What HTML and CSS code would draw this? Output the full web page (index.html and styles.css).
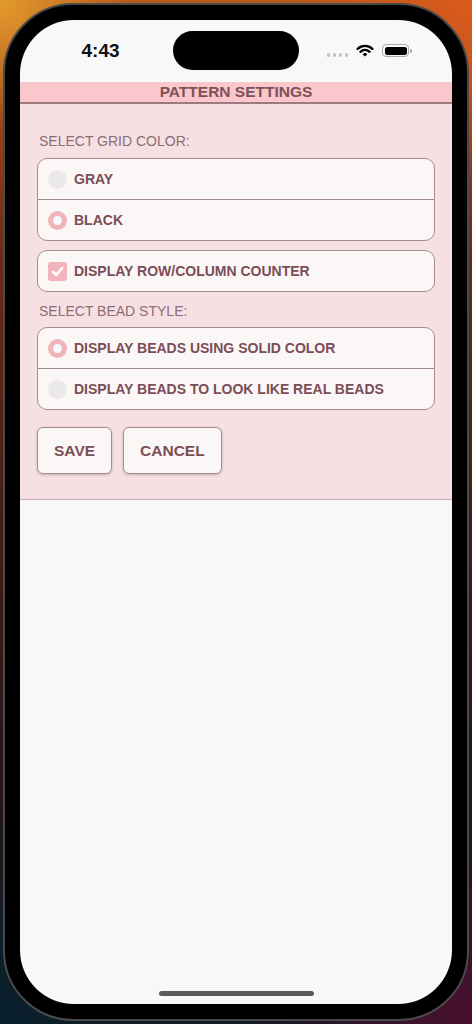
FILE: index.html
```html
<!DOCTYPE html>
<html lang="en">
<head>
<meta charset="utf-8">
<title>Pattern Settings</title>
<link rel="stylesheet" href="styles.css">
</head>
<body>
<div class="device">
  <div class="screen">
    <div class="status-bar">
      <div class="sb-left"><span class="time">4:43</span></div>
      <div class="island"></div>
      <div class="sb-right">
        <span class="dots"><i></i><i></i><i></i><i></i></span>
        <svg class="wifi" viewBox="0 0 18 13" width="18" height="13">
          <path d="M1.6 4.9 A10.8 10.8 0 0 1 16.4 4.9" fill="none" stroke="#000" stroke-width="2.3" stroke-linecap="round"/>
          <path d="M4.4 7.8 A6.7 6.7 0 0 1 13.6 7.8" fill="none" stroke="#000" stroke-width="2.3" stroke-linecap="round"/>
          <path d="M9 12.6 L6.7 10.3 A3.2 3.2 0 0 1 11.3 10.3 Z" fill="#000"/>
        </svg>
        <span class="battery"><span class="battery-fill"></span></span>
      </div>
    </div>

    <div class="app-header">PATTERN SETTINGS</div>

    <section class="settings">
      <p class="label">SELECT GRID COLOR:</p>
      <div class="group">
        <div class="option"><span class="radio"></span><span>GRAY</span></div>
        <div class="option"><span class="radio checked"></span><span>BLACK</span></div>
      </div>

      <div class="group single">
        <div class="option">
          <span class="checkbox">
            <svg viewBox="0 0 19 19" width="19" height="19"><path d="M5 9.8 L8.2 13 L14.2 6" fill="none" stroke="#fff" stroke-width="2.6" stroke-linecap="round" stroke-linejoin="round"/></svg>
          </span>
          <span>DISPLAY ROW/COLUMN COUNTER</span>
        </div>
      </div>

      <p class="label second">SELECT BEAD STYLE:</p>
      <div class="group">
        <div class="option"><span class="radio checked"></span><span>DISPLAY BEADS USING SOLID COLOR</span></div>
        <div class="option"><span class="radio"></span><span>DISPLAY BEADS TO LOOK LIKE REAL BEADS</span></div>
      </div>

      <div class="actions">
        <button class="btn">SAVE</button>
        <button class="btn">CANCEL</button>
      </div>
    </section>

    <div class="fill"></div>
    <div class="home-indicator"></div>
  </div>
</div>
</body>
</html>
```

FILE: styles.css
```css
* {
  box-sizing: border-box;
}

html, body {
  margin: 0;
  padding: 0;
}

body {
  width: 472px;
  height: 1024px;
  overflow: hidden;
  font-family: "Liberation Sans", Arial, sans-serif;
  background:
    radial-gradient(circle at 0 0, #e39a2c 0, rgba(227,154,44,0) 130px),
    radial-gradient(circle at 100% 0, #db5a1c 0, rgba(219,90,28,0) 170px),
    radial-gradient(circle at 100% 100%, #4a1030 0, rgba(74,16,48,0) 220px),
    radial-gradient(circle at 0 100%, #08202c 0, rgba(8,32,44,0) 220px),
    linear-gradient(180deg, #b85a1e 0, #6a2a16 260px, #3e1c16 560px, #221418 820px, #141a22 1024px);
}

.device {
  margin: 3px;
  width: 466px;
  height: 1018px;
  padding: 15px;
  background: #000;
  border: 2px solid #4a4a4a;
  border-radius: 70px;
}

.screen {
  width: 432px;
  height: 984px;
  border-radius: 54px;
  overflow: hidden;
  background: #f8f8f8;
  display: flex;
  flex-direction: column;
}

/* status bar */
.status-bar {
  height: 62px;
  padding-top: 11px;
  display: flex;
  align-items: flex-start;
  flex-shrink: 0;
}

.sb-left {
  width: 153px;
  height: 39px;
  padding-left: 8px;
  display: flex;
  align-items: center;
  justify-content: center;
}

.time {
  font-size: 19px;
  font-weight: 700;
  color: #111;
  letter-spacing: 0;
}

.island {
  width: 126px;
  height: 39px;
  background: #000;
  border-radius: 20px;
}

.sb-right {
  width: 153px;
  height: 39px;
  padding-right: 13px;
  display: flex;
  align-items: center;
  justify-content: center;
  gap: 8px;
}

.dots {
  display: flex;
  gap: 2.4px;
  margin-top: 9px;
  margin-right: 0;
}

.dots i {
  display: block;
  width: 3.6px;
  height: 3.6px;
  border-radius: 50%;
  background: #c4c4c4;
}

.wifi {
  display: block;
  margin-left: 0;
}

.battery {
  position: relative;
  width: 27px;
  height: 13px;
  border: 1.3px solid #a9a9a9;
  border-radius: 4px;
  padding: 1.5px;
  margin-right: 2px;
}

.battery::after {
  content: "";
  position: absolute;
  right: -4px;
  top: 3.5px;
  width: 2px;
  height: 4px;
  border-radius: 0 1.5px 1.5px 0;
  background: #a9a9a9;
}

.battery-fill {
  display: block;
  width: 100%;
  height: 100%;
  background: #000;
  border-radius: 2.5px;
}

/* app header */
.app-header {
  height: 22px;
  background: #f9c7cc;
  border-bottom: 2px solid #9e7b81;
  text-align: center;
  font-size: 15.5px;
  line-height: 20px;
  font-weight: 700;
  color: #7d5158;
  flex-shrink: 0;
}

/* settings panel */
.settings {
  background: #f7e0e3;
  padding: 27px 17px 25px;
  border-bottom: 1px solid #c6afb2;
  flex-shrink: 0;
}

.label {
  margin: 0 0 7px 2px;
  font-size: 14px;
  line-height: 20px;
  color: #8b6d73;
}

.label.second {
  margin-top: 9px;
  margin-bottom: 6px;
}

.group {
  background: #fcf7f7;
  border: 1px solid #a68c91;
  border-radius: 10px;
  overflow: hidden;
}

.group.single {
  margin-top: 9px;
}

.option {
  height: 40px;
  display: flex;
  align-items: center;
  gap: 7px;
  padding-left: 10px;
  font-size: 14px;
  font-weight: 700;
  color: #7b4d56;
}

.option + .option {
  height: 41px;
  border-top: 1px solid #a68c91;
}

.radio {
  width: 19px;
  height: 19px;
  border-radius: 50%;
  background: #ebe8e8;
  flex-shrink: 0;
}

.radio.checked {
  background: #f5fbfb;
  border: 5.5px solid #f0b3b9;
}

.checkbox {
  width: 19px;
  height: 19px;
  border-radius: 3px;
  background: #f1b4ba;
  flex-shrink: 0;
  display: flex;
}

.actions {
  margin-top: 17px;
  display: flex;
  gap: 11px;
}

.btn {
  height: 47px;
  padding: 0 16px;
  background: #fcf7f7;
  border: 1px solid #a68c91;
  border-radius: 6px;
  box-shadow: 0 1px 3px rgba(0, 0, 0, 0.22);
  font-family: "Liberation Sans", Arial, sans-serif;
  font-size: 15.5px;
  font-weight: 700;
  color: #7b4d56;
}

.fill {
  flex: 1;
}

.home-indicator {
  width: 155px;
  height: 5px;
  margin: 0 auto 8px;
  border-radius: 3px;
  background: #5a5a5a;
  flex-shrink: 0;
}
```
